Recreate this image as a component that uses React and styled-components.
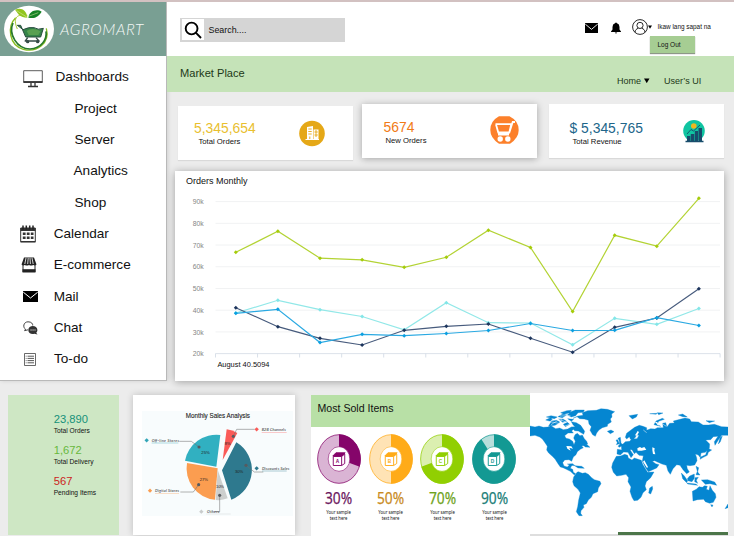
import React from "react";
import styled, { createGlobalStyle } from "styled-components";

const Global = createGlobalStyle`
  * { box-sizing: border-box; }
  body { margin: 0; background: #ececec; font-family: "Liberation Sans", Arial, sans-serif; color: #111; }
  svg { display: block; flex: none; }
`;

const Page = styled.div`
  width: 734px;
  height: 536px;
  overflow: hidden;
  background: #ececec;
  border-top: 2px solid #d2c1c1;
`;
const Upper = styled.div`
  display: grid;
  grid-template-columns: 167px 1fr;
  height: 379px;
`;
const Sidebar = styled.aside`
  background: #fff;
  border-right: 1px solid #b9b9b9;
  border-bottom: 1px solid #b9b9b9;
  box-shadow: 1px 0 4px rgba(0, 0, 0, 0.12);
`;
const Brand = styled.div`
  display: flex;
  align-items: center;
  height: 54px;
  padding-left: 4px;
  background: #799f93;
`;
const BrandName = styled.span`
  margin-left: 6px;
  font: italic 300 15.5px/20px Lato, sans-serif;
  letter-spacing: 0.6px;
  color: #f4f8f6;
`;
const Nav = styled.nav`
  padding-top: 5.3px;
`;
const NavRow = styled.div`
  display: flex;
  align-items: center;
  height: 31.33px;
  padding-left: ${(p) => p.$indent}px;
  font-size: 13.6px;
`;
const IconCell = styled.span`
  display: flex;
  width: ${(p) => p.$width}px;
  padding-top: ${(p) => p.$drop || 0}px;
`;
const Main = styled.main`
  min-width: 0;
`;
const TopBar = styled.header`
  display: flex;
  align-items: flex-start;
  height: 54px;
  background: #fff;
  padding: 15.5px 0 0 13px;
`;
const Search = styled.div`
  display: flex;
  align-items: center;
  width: 165px;
  height: 24.5px;
  background: #d5d5d5;
  padding-left: 2px;
  font-size: 8.9px;
`;
const SearchIcon = styled.span`
  display: grid;
  place-items: center;
  width: 22px;
  height: 21px;
  margin-right: 4.5px;
  background: #fff;
`;
const Alerts = styled.div`
  display: flex;
  align-items: center;
  gap: 12.5px;
  height: 22px;
  margin-left: 240px;
  margin-top: -1px;
`;
const Account = styled.div`
  margin-left: 11.5px;
  margin-top: -0.5px;
`;
const AccountLine = styled.div`
  display: flex;
  align-items: center;
  height: 19px;
  font-size: 6.4px;
  white-space: nowrap;
`;
const AccountName = styled.span`
  margin-left: 5.5px;
`;
const LogOut = styled.button`
  display: block;
  width: 45px;
  height: 17px;
  margin: 0 0 0 17.5px;
  padding: 0 6px 1px 0;
  border: 0;
  background: #a6cd93;
  box-shadow: 0 1px 1px #8d9887;
  font: 6.5px "Liberation Sans", sans-serif;
  color: #111;
`;
const TitleBar = styled.div`
  display: flex;
  height: 36px;
  padding-left: 13px;
  background: #c5e3b8;
  color: #1c3817;
`;
const PageTitle = styled.h1`
  width: 437px;
  margin: 10px 0 0;
  font: 11.1px/14px "Liberation Sans", sans-serif;
`;
const TopLink = styled.span`
  display: flex;
  align-items: center;
  gap: 3px;
  height: 12px;
  margin: 18.5px 14.5px 0 0;
  font-size: 9px;
  white-space: nowrap;
`;
const Stats = styled.section`
  display: grid;
  grid-template-columns: 184px 187px 175px;
  height: 67px;
  padding: 0 0 0 11px;
  margin-top: 12px;
`;
const StatCard = styled.article`
  display: flex;
  justify-content: space-between;
  width: 175px;
  height: 54px;
  margin-top: ${(p) => p.$drop || 0}px;
  padding: ${(p) => p.$pad};
  background: #fff;
  box-shadow: ${(p) => (p.$raised ? "0 1px 7px rgba(0,0,0,.3)" : "0 1px 1px rgba(0,0,0,.08)")};
`;
const CardIcon = styled.span`
  margin-top: ${(p) => p.$shift}px;
`;
const StatNumber = styled.div`
  font-size: 13.9px;
  line-height: 17px;
  color: ${(p) => p.$color};
`;
const StatLabel = styled.div`
  padding-left: ${(p) => p.$left}px;
  font-size: 7.7px;
  line-height: 10px;
`;
const ChartCard = styled.section`
  width: 549px;
  height: 209.5px;
  margin-left: 8px;
  padding: 4px 0 0 11px;
  background: #fff;
  box-shadow: 0 1px 8px rgba(0, 0, 0, 0.32);
`;
const ChartTitle = styled.h2`
  margin: 0;
  font: 9px/12px "Liberation Sans", sans-serif;
`;
const Lower = styled.div`
  display: flex;
  align-items: flex-start;
  height: 155px;
  padding: 12px 0 0 8px;
`;
const Totals = styled.section`
  width: 111px;
  height: 139.5px;
  margin: 2px 13.5px 0 0;
  padding: 16.5px 0 0 45.7px;
  background: #cee7c4;
`;
const TotalItem = styled.div`
  height: 31.2px;
  font-size: 6.65px;
  line-height: 9px;
  white-space: nowrap;
`;
const TotalNumber = styled.div`
  font-size: 11.2px;
  line-height: 14px;
  color: ${(p) => p.$color};
`;
const PieCard = styled.section`
  width: 162.5px;
  height: 139.5px;
  margin: 2px 16px 0 0;
  padding: 16px 0 0 9.5px;
  background: #fff;
  box-shadow: 0 0 7px rgba(0, 0, 0, 0.2);
`;
const SoldCard = styled.section`
  width: 219px;
  height: 142px;
  margin-top: 2px;
  background: #fff;
`;
const SoldTitle = styled.h2`
  height: 31.7px;
  margin: 0;
  padding-left: 6.5px;
  background: #b8e0a6;
  font: 10.6px/27px "Liberation Sans", sans-serif;
`;
const SoldList = styled.div`
  display: grid;
  grid-template-columns: repeat(4, 51.8px);
  padding: 7px 0 0 2px;
`;
const SoldItem = styled.div`
  display: flex;
  flex-direction: column;
  align-items: center;
`;
const Percent = styled.div`
  margin-top: 4px;
  font: 16.8px/20px "Noto Sans", sans-serif;
  -webkit-text-stroke: 0.25px currentColor;
  color: ${(p) => p.$color};
  transform: scaleX(0.82);
`;
const Sample = styled.div`
  margin-top: 1px;
  font: 5px/6.6px "Noto Sans", sans-serif;
  text-align: center;
  white-space: nowrap;
  transform: scaleX(0.84);
`;
const MapCard = styled.section`
  width: 198px;
  height: 143px;
  background: #fff;
  border-bottom: 2px solid #dedede;
`;
const MapAccent = styled.div`
  width: 110px;
  height: 2.5px;
  margin-left: 88px;
  background: #4c7549;
`;

const Logo = () => (
  <svg width="50" height="48" viewBox="0 0 150 144">
    <ellipse cx="75" cy="72" rx="75" ry="70" fill="#fff" />
    <path d="M35 38C8 65 15 120 58 133C98 144 139 114 127 70" fill="none" stroke="#88bd20" strokeWidth="4" />
    <path d="M27 54C12 87 39 132 78 132C112 130 130 103 126 79" fill="none" stroke="#287a2b" strokeWidth="5" />
    <path d="M40 72C25 37 40 26 70 31" fill="none" stroke="#a8c736" strokeWidth="3" />
    <path d="M33 14C50 6 68 14 70 38C48 38 43 27 33 14Z" fill="#91c51f" />
    <path d="M73 38C75 18 98 10 113 20C105 33 93 43 73 38Z" fill="#168225" />
    <path d="M38 17L68 36L103 23" fill="none" stroke="#e3f1ad" strokeWidth="1.5" />
    <path d="M40 61H50L65 96H110L118 70Q102 76 90 68Q75 65 57 74Z" fill="#358449" stroke="#294d3f" strokeWidth="3" />
    <path d="M68 78Q85 65 110 79L103 90H74Z" fill="#58a052" />
    <path d="M62 108H107M71 98L64 108M96 98L105 108" stroke="#354b46" strokeWidth="4" />
    <circle cx="71" cy="110" r="5" fill="#354b46" /><circle cx="101" cy="110" r="5" fill="#354b46" />
  </svg>
);
const Monitor = () => (
  <svg width="20" height="18" viewBox="0 0 20 18" fill="none" stroke="#333">
    <path d="M.7.7H19.3V12.3H.7Z" strokeWidth=".8" /><path d="M.5 12H19.5" strokeWidth="1.8" />
    <path d="M8 13V16M12 13V16M5 16.5H15" strokeWidth="1.3" />
  </svg>
);
const Calendar = () => (
  <svg width="16" height="18" viewBox="0 0 16 18">
    <path d="M.7 3H15.3V16.6H.7Z" fill="#fff" stroke="#333" strokeWidth="1" />
    <path d="M.5 3H15.5V6H.5ZM.5 16H15.5V17.5H.5Z" fill="#333" />
    <path d="M3 .5V4.5M6.3 .5V4.5M9.7 .5V4.5M13 .5V4.5" stroke="#222" strokeWidth="1.5" />
    <path d="M2.8 8.8H13.5M2.8 12.8H13.5" stroke="#333" strokeWidth="2.6" strokeDasharray="2.8 1.2" />
  </svg>
);
const Store = () => (
  <svg width="16" height="16" viewBox="0 0 16 16">
    <path d="M3 .5H13L15.5 7.5Q14 9.2 12.2 8Q10 9.2 8 8Q6 9.2 3.8 8Q2 9 .5 7.5Z" fill="#222" />
    <path d="M5 1L3.8 7M7.2 1L6.7 7M9 1L9.4 7M11 1L12.2 7" stroke="#fff" strokeWidth=".8" />
    <path d="M2 8V15M14 8V15" stroke="#222" /><path d="M1.5 12.2H14.5V15.5H1.5Z" fill="#222" />
  </svg>
);
const Mail = ({ w = 15, h = 11 }) => (
  <svg width={w} height={h} viewBox="0 0 15 11" preserveAspectRatio="none">
    <path d="M0 0H15V11H0Z" /><path d="M.3 1.2L7.5 7L14.7 1.2" fill="none" stroke="#fff" strokeWidth="1" />
  </svg>
);
const Chat = () => (
  <svg width="15" height="14" viewBox="0 0 15 14">
    <path d="M2.5 8.2C-.3 6.5.2 1 5 .8C8.5.7 10 3 9.7 4.5M2.6 8L1.6 9.7L5 8.8" fill="none" stroke="#444" />
    <path d="M5.3 9C5.3 3.7 14.4 3.7 14.4 9C14.4 10.3 14 11 13.2 11.7L14.5 13.4L11.3 12.8C8 13.5 5.3 12 5.3 9Z" fill="#333" />
    <path d="M7.5 9H12.5" stroke="#fff" strokeWidth="1.1" strokeDasharray="1.1 .9" />
  </svg>
);
const Todo = () => (
  <svg width="12" height="13" viewBox="0 0 12 13" fill="none" stroke="#444">
    <path d="M.5.5H11.5V12.5H.5Z" strokeWidth=".8" />
    <path d="M3.5 3.2H10M3.5 5.4H10M3.5 7.6H10M3.5 9.8H10" strokeWidth=".9" />
    <path d="M1.7 3.2H2.6M1.7 5.4H2.6M1.7 7.6H2.6M1.7 9.8H2.6" strokeWidth=".8" />
  </svg>
);
const Caret = ({ size = 5.5 }) => (
  <svg width={size} height={size} viewBox="0 0 6 6"><path d="M0 .6H6L3 5.6Z" /></svg>
);

const NAV = [
  ["Dashboards", 23, Monitor, 32.5, 5],
  ["Project", 74.5],
  ["Server", 74.5],
  ["Analytics", 73.5],
  ["Shop", 74.5],
  ["Calendar", 20, Calendar, 33.7, 0],
  ["E-commerce", 20.5, Store, 33.2, 0],
  ["Mail", 22.7, Mail, 31, 1],
  ["Chat", 22.7, Chat, 31, 0],
  ["To-do", 24, Todo, 30, 2],
];

const SERIES = [
  ["#b3d334", [252.3, 231.3, 258.2, 259.8, 267.3, 257.3, 230.2, 247.5, 311.5, 235.3, 246.2, 198.3], "#a5cc0b"],
  ["#92e8e8", [313, 300.3, 309.7, 316.5, 329.8, 302.7, 322.7, 323, 344.7, 318.3, 324.3, 308.5], "#83e6e8"],
  ["#475b7d", [307.7, 326.7, 338.3, 345, 330.3, 326.3, 324, 338.3, 352.2, 327.3, 318, 288.8], "#1d355d"],
  ["#2aa9e2", [313.3, 309.3, 342.5, 334.3, 335.7, 333.5, 330.5, 323.5, 330.5, 330.3, 317.7, 325.5], "#0b9fe0"],
];
const px = (i) => 235.8 + i * 42.1;

const LineChart = () => (
  <svg width="537" height="188" viewBox="186 187 537 188" fontFamily="Liberation Sans">
    {[90, 80, 70, 60, 50, 40, 30, 20].map((n, i) => (
      <React.Fragment key={n}>
        <path d={`M215.5 ${201.6 + i * 21.72}H720`} stroke={n === 20 ? "#dce2ea" : "#f1f2f3"} strokeWidth="1" />
        <text x="192.8" y={204.2 + i * 21.72} fontSize="6.8" fill="#858585">{n}k</text>
      </React.Fragment>
    ))}
    {Array.from({ length: 13 }, (_, i) => (
      <path key={i} d={`M${215.5 + i * 42.05} 353.5v4`} stroke="#d5dde6" strokeWidth=".9" />
    ))}
    {SERIES.map(([line, ys, dot]) => (
      <g key={line}>
        <polyline points={ys.map((y, i) => `${px(i)},${y}`).join(" ")} fill="none" stroke={line} strokeWidth="1.2" />
        {ys.map((y, i) => <path key={i} d={`M${px(i)} ${y - 2}l2 2l-2 2l-2-2z`} fill={dot} />)}
      </g>
    ))}
    <text x="217.4" y="367" fontSize="7.45" fill="#111">August 40.5094</text>
  </svg>
);

const PieChart = () => (
  <svg width="151" height="105" viewBox="22 34 453 315" fontFamily="Liberation Sans" fill="#222">
    <path d="M22 34H475V349H22Z" fill="#f8fcfd" />
    <text x="153" y="54" fontSize="19.5" textLength="193" lengthAdjust="spacingAndGlyphs" stroke="#222" strokeWidth=".3">Monthly Sales Analysis</text>
    <path d="M245 201L151 183A96 96 0 0 1 257 106Z" fill="#31b0c1" />
    <path d="M249 206L157 190A94 94 0 0 0 241 300Z" fill="#fb9d50" />
    <path d="M249 210L243 301Q263 303 279 296Z" fill="#cdcfce" />
    <path d="M262 212L305 128A96 96 0 0 1 290 300Z" fill="#2e798e" />
    <path d="M264 181L276 89Q294 91 308 100Z" fill="#fa5b58" />
    <g fill="none" stroke="#6d6d6d" strokeWidth="1.6">
      <path d="M193 142L170 125H134M296 110L306 89H360M334 197L359 217H386M192 255L176 277H137M255 287V336H239" />
    </g>
    {[[193, 142], [296, 110], [334, 197], [192, 255], [255, 287]].map(([x, y]) => <circle key={x} cx={x} cy={y} r="4.7" fill="#575b60" />)}
    <g fontSize="12.5">
      <text x="200" y="163">25%</text><text x="195" y="244">27%</text>
      <text x="301" y="221">30%</text><text x="244" y="265" textLength="24">10%</text><text x="270" y="136" textLength="18">8%</text>
    </g>
    <g fontFamily="Lato" fontStyle="italic" fontSize="11.5">
      <text x="51" y="126" textLength="82">Off-line Stores</text>
      <text x="381" y="94" textLength="72">B2B Channels</text>
      <text x="382" y="210" textLength="82">Discounts Sales</text>
      <text x="61" y="277" textLength="72">Digital Stores</text>
      <text x="217" y="341" textLength="37">Others</text>
    </g>
    {[[36, 122, "#31a5b7", 51, 130, 80], [366, 89, "#fa5b58", 381, 98, 75], [366, 206, "#2e798e", 382, 214, 74], [46, 273, "#fb9d50", 61, 281, 72], [200, 336, "#c9cccc", 215, 343, 73]].map(([x, y, c, a, b, w]) => (
      <g key={y}>
        <path d={`M${x} ${y - 6.5}l6.5 6.5l-6.5 6.5l-6.5-6.5z`} fill={c} />
        <path d={`M${a} ${b}h${w}`} stroke={c} strokeWidth="1.5" opacity=".75" />
      </g>
    ))}
  </svg>
);

const Donut = ({ pct, color, pale, letter }) => {
  const a = (pct / 100) * Math.PI * 2;
  return (
    <svg width="44" height="50" viewBox="0 0 50 50" preserveAspectRatio="none">
      <circle cx="25" cy="25" r="24.3" fill={pale} stroke={color} strokeWidth=".8" />
      <path d={`M25 25V.3A24.7 24.7 0 ${pct > 50 ? 1 : 0} 1 ${25 + 24.7 * Math.sin(a)} ${25 - 24.7 * Math.cos(a)}Z`} fill={color} />
      <circle cx="25" cy="25" r="12.3" fill="#fff" stroke={color} strokeWidth=".6" />
      <g fill="none" stroke={color} strokeWidth="1">
        <path d="M18.5 22.5H28V31.5H18.5ZM28 22.5L31.5 20V29.5L28 31.5" />
        <path d="M18 22L21.5 18.8H32L28.5 22Z" fill={color} />
      </g>
      <text x="23.4" y="29.3" textAnchor="middle" fontFamily="Liberation Sans" fontWeight="bold" fontSize="5.5" fill={color}>{letter}</text>
    </svg>
  );
};

const LAND = [
  "M15 123L30 126L42 123L55 127L68 126L78 122L92 131L104 129L115 134L128 132L139 126L147 131L140 138L145 144L129 144L119 152L123 160L133 162L143 169L147 179L151 169L146 159L150 149L157 145L165 152L172 150L178 161L185 169L188 177L180 181L170 183L175 188L166 193L157 200L153 209L145 216L140 229L132 224L119 225L113 233L117 243L127 246L133 240L141 240L136 250L143 253L145 262L152 266L148 270L136 259L124 253L114 248L106 246L99 236L90 222L82 214L71 204L65 195L67 184L60 173L52 162L44 156L30 151L15 153Z",
  "M144 100L159 93L174 91L172 83L188 77L214 76L228 71L247 73L269 80L260 87L261 96L256 102L259 111L248 118L247 124L232 128L222 135L215 144L211 154L203 149L195 136L199 125L192 117L190 106L178 102L164 101L156 95Z",
  "M62 105L76 98L82 102L76 109ZM80 108L96 106L105 112L90 121L71 123ZM64 96L78 92L97 96L88 101ZM99 95L112 88L125 90L112 98ZM107 83L125 77L139 76L135 83L117 88ZM138 80L151 75L178 75L175 82L159 83L152 92L139 96L127 90ZM101 102L114 102L125 109L113 112ZM128 101L146 103L139 109ZM139 110L154 113L167 121L179 139L176 148L160 138L149 137L139 126L150 125L144 119ZM115 118L127 112L134 118L121 125ZM175 181L185 178L195 187L181 186ZM247 139L258 135L267 140L256 146Z",
  "M146 276L156 262L160 260L172 265L181 263L190 268L200 278L208 284L225 289L228 296L220 309L218 320L204 326L199 337L190 345L184 356L175 360L177 367L168 377L167 385L172 392L162 392L154 380L158 365L161 345L166 324L159 313L147 302L143 290Z",
  "M274 214L287 213L299 208L308 211L310 219L321 225L328 219L349 226L353 238L364 256L368 262L387 261L377 278L364 290L360 303L364 314L354 323L348 337L338 346L327 347L321 337L315 319L318 306L309 290L311 278L303 268L290 271L275 273L265 262L260 247L263 234Z",
  "M371 324L374 309L382 304L383 312L377 327Z",
  "M276 207L277 193L290 195L289 184L281 181L294 177L301 170L314 169L320 162L336 161L342 151L335 150L331 157L322 166L316 162L313 155L305 162L301 157L305 145L318 135L329 127L343 121L354 124L365 128L365 136L377 131L390 132L397 128L415 128L413 115L422 113L426 126L434 115L448 114L445 108L465 103L480 99L494 102L499 110L520 111L534 120L550 120L568 118L590 125L609 126V151L590 151L580 165L570 181L568 170L579 154L565 155L557 164L542 165L554 177L553 190L541 202L528 204L526 218L520 210L511 207L515 218L516 227L509 240L495 242L485 241L487 251L493 261L485 266L474 254L465 241L455 239L444 251L436 268L429 258L424 241L411 237L399 232L389 227L382 229L392 236L402 239L395 249L370 260L362 249L356 237L352 228L355 212L342 211L333 202L328 206L321 194L315 194L325 209L318 218L309 202L296 201L286 210Z",
  "M274 179L283 176L278 164L273 165L277 173ZM288 174L293 179L284 187L279 184L284 179L283 168L279 160L286 157Z",
  "M312 92L338 88L334 96L322 102ZM374 86L397 85L393 88ZM397 83L414 84L401 89ZM387 119L393 108L412 100L418 103L401 109L396 119L407 124ZM460 90L473 87L487 96L473 95ZM543 107L569 108L553 113ZM580 177L585 158L592 153L586 170Z",
  "M548 190L560 195L550 202L547 211L535 217L525 223L527 216L542 209ZM513 244L521 248L518 261L525 270L513 269L517 259ZM469 264L478 273L488 287L485 293L473 281ZM487 281L494 273L508 267L508 280L501 290L489 287ZM510 278L520 277L514 286L518 295L509 290ZM486 294L512 297L518 301L488 297ZM529 285L548 284L569 291L575 301L555 296L541 298L534 290Z",
  "M502 319L514 313L522 305L532 307L539 302L547 304L544 313L552 316L555 302L562 316L571 326L573 337L565 352L554 355L541 350L536 343L517 344L504 348ZM557 359L564 360L561 366ZM609 357L600 371L609 368ZM127 237L143 236L150 242L136 241ZM149 242L170 244L178 250L159 249Z",
];
const WorldMap = () => (
  <svg width="198" height="139" viewBox="15 24 594 417">
    {LAND.map((d, i) => <path key={i} d={d} fill="#0586d1" stroke="#0586d1" strokeWidth="1" />)}
    <path d="M337 190L345 186L350 189L358 186L364 194L350 197L338 197ZM382 187L389 190L388 197L391 208L384 207L382 195ZM358 226L369 246L366 249L354 230ZM330 151L338 138L342 141L336 152ZM124 183L139 184L144 191L133 188L137 197L127 191ZM389 110L397 111L401 122Z" fill="#fff" />
    <path d="M73 110L103 115L112 101M78 119L104 103L124 112M105 93L136 92M110 127L141 115M355 135L365 143M413 117L424 124" fill="none" stroke="#fff" strokeWidth="1.5" />
  </svg>
);

export default function App() {
  return (
    <Page>
      <Global />
      <Upper>
        <Sidebar>
          <Brand><Logo /><BrandName>AGROMART</BrandName></Brand>
          <Nav>
            {NAV.map(([label, indent, Icon, width, drop]) => (
              <NavRow key={label} $indent={indent}>
                {Icon && <IconCell $width={width} $drop={drop}><Icon /></IconCell>}
                {label}
              </NavRow>
            ))}
          </Nav>
        </Sidebar>
        <Main>
          <TopBar>
            <Search>
              <SearchIcon>
                <svg width="18" height="18" viewBox="0 0 18 18" fill="none" stroke="#000" strokeWidth="1.9"><circle cx="7.6" cy="7.5" r="5.9" /><path d="M11.8 11.7L17 17" /></svg>
              </SearchIcon>
              Search....
            </Search>
            <Alerts>
              <Mail w={13} h={10} />
              <svg width="10" height="12" viewBox="0 0 10 12"><path d="M4 1.2Q5-.3 6 1.2Q8.5 2 8.5 5V7.5L10 9.5V10H0V9.5L1.5 7.5V5Q1.5 2 4 1.2ZM3.7 10.6H6.3Q5 12.6 3.7 10.6Z" /></svg>
            </Alerts>
            <Account>
              <AccountLine>
                <svg width="16" height="16" viewBox="0 0 16 16" fill="none" stroke="#111" strokeWidth=".9"><circle cx="8" cy="8" r="7.4" /><circle cx="8" cy="6.4" r="3.1" /><path d="M3 13.3C3.2 10.8 4.5 10 6.3 9.2M9.7 9.2C11.6 10 12.8 10.9 13 13.3" /></svg>
                <Caret size={4} />
                <AccountName>Ikaw lang sapat na</AccountName>
              </AccountLine>
              <LogOut>Log Out</LogOut>
            </Account>
          </TopBar>
          <TitleBar>
            <PageTitle>Market Place</PageTitle>
            <TopLink>Home <Caret /></TopLink>
            <TopLink>User’s UI</TopLink>
          </TitleBar>
          <Stats>
            <StatCard $drop={2} $pad="13.5px 28px 0 16px">
              <div><StatNumber $color="#e9c02f">5,345,654</StatNumber><StatLabel $left={4.5}>Total Orders</StatLabel></div>
              <svg width="26" height="28" viewBox="0 0 26 28"><circle cx="13" cy="13.5" r="12.8" fill="#e5a817" /><path d="M8 7L14 6V19H8ZM14.5 9.5H19.5V19H14.5ZM6.5 19H20V20H6.5Z" fill="#fff" /><path d="M9.3 9H12.7M9.3 11.5H12.7M9.3 14H12.7M15.5 12H18.8M15.5 15H18.8M10.8 16.5V19M17 10V17" stroke="#e5a817" strokeWidth=".9" /></svg>
            </StatCard>
            <StatCard $raised $pad="15px 18px 0 21.5px">
              <div><StatNumber $color="#f17a16">5674</StatNumber><StatLabel $left={2}>New Orders</StatLabel></div>
              <CardIcon $shift={-3.5}>
                <svg width="29" height="28" viewBox="0 0 29 28"><path d="M9 .3H19.5Q28.7 5 28.7 14Q28.7 22 20 27.7H9Q.3 22 .3 14Q.3 5 9 .3Z" fill="#fc802b" /><path d="M5.5 8.2H21.3L19.3 16.5H8.3L6 8.5M19 18.5H8M19.5 16L22.7 6H25" fill="none" stroke="#fff" strokeWidth="1.8" /><circle cx="10.2" cy="23" r="2.7" fill="#fff" /><circle cx="17.8" cy="23" r="2.7" fill="#fff" /></svg>
              </CardIcon>
            </StatCard>
            <StatCard $pad="15.5px 19px 0 20.5px">
              <div><StatNumber $color="#20658a">$ 5,345,765</StatNumber><StatLabel $left={3}>Total Revenue</StatLabel></div>
              <svg width="22" height="23" viewBox="0 0 22 23"><circle cx="11" cy="10.8" r="10.8" fill="#10c4a1" /><circle cx="10.8" cy="6" r="2.8" fill="#efb720" /><path d="M4 16H7.3V21H4ZM7.8 14H11.2V21H7.8ZM11.8 11H15V21H11.8ZM15.5 8H19V21H15.5ZM2.5 20.8H20.5V22.2H2.5Z" fill="#174c6b" /><path d="M4 14L8 9.5L10.5 11L17 5" fill="none" stroke="#174c6b" strokeWidth=".9" /></svg>
            </StatCard>
          </Stats>
          <ChartCard><ChartTitle>Orders Monthly</ChartTitle><LineChart /></ChartCard>
        </Main>
      </Upper>
      <Lower>
        <Totals>
          <TotalItem><TotalNumber $color="#15917a">23,890</TotalNumber>Total Orders</TotalItem>
          <TotalItem><TotalNumber $color="#67b83c">1,672</TotalNumber>Total Delivery</TotalItem>
          <TotalItem><TotalNumber $color="#cc1d1c">567</TotalNumber>Pending Items</TotalItem>
        </Totals>
        <PieCard><PieChart /></PieCard>
        <SoldCard>
          <SoldTitle>Most Sold Items</SoldTitle>
          <SoldList>
            {[[30, "#85056a", "#dab4d4", "A", "#6d195f"], [50, "#ffab19", "#ffe3b5", "B", "#c98b1e"], [70, "#91cf02", "#dbefb0", "C", "#6fa31c"], [90, "#139993", "#b7dedb", "D", "#207e78"]].map(([pct, color, pale, letter, ink]) => (
              <SoldItem key={pct}>
                <Donut pct={pct} color={color} pale={pale} letter={letter} />
                <Percent $color={ink}>{pct}%</Percent>
                <Sample>Your sample<br />text here</Sample>
              </SoldItem>
            ))}
          </SoldList>
        </SoldCard>
        <MapCard><WorldMap /><MapAccent /></MapCard>
      </Lower>
    </Page>
  );
}
